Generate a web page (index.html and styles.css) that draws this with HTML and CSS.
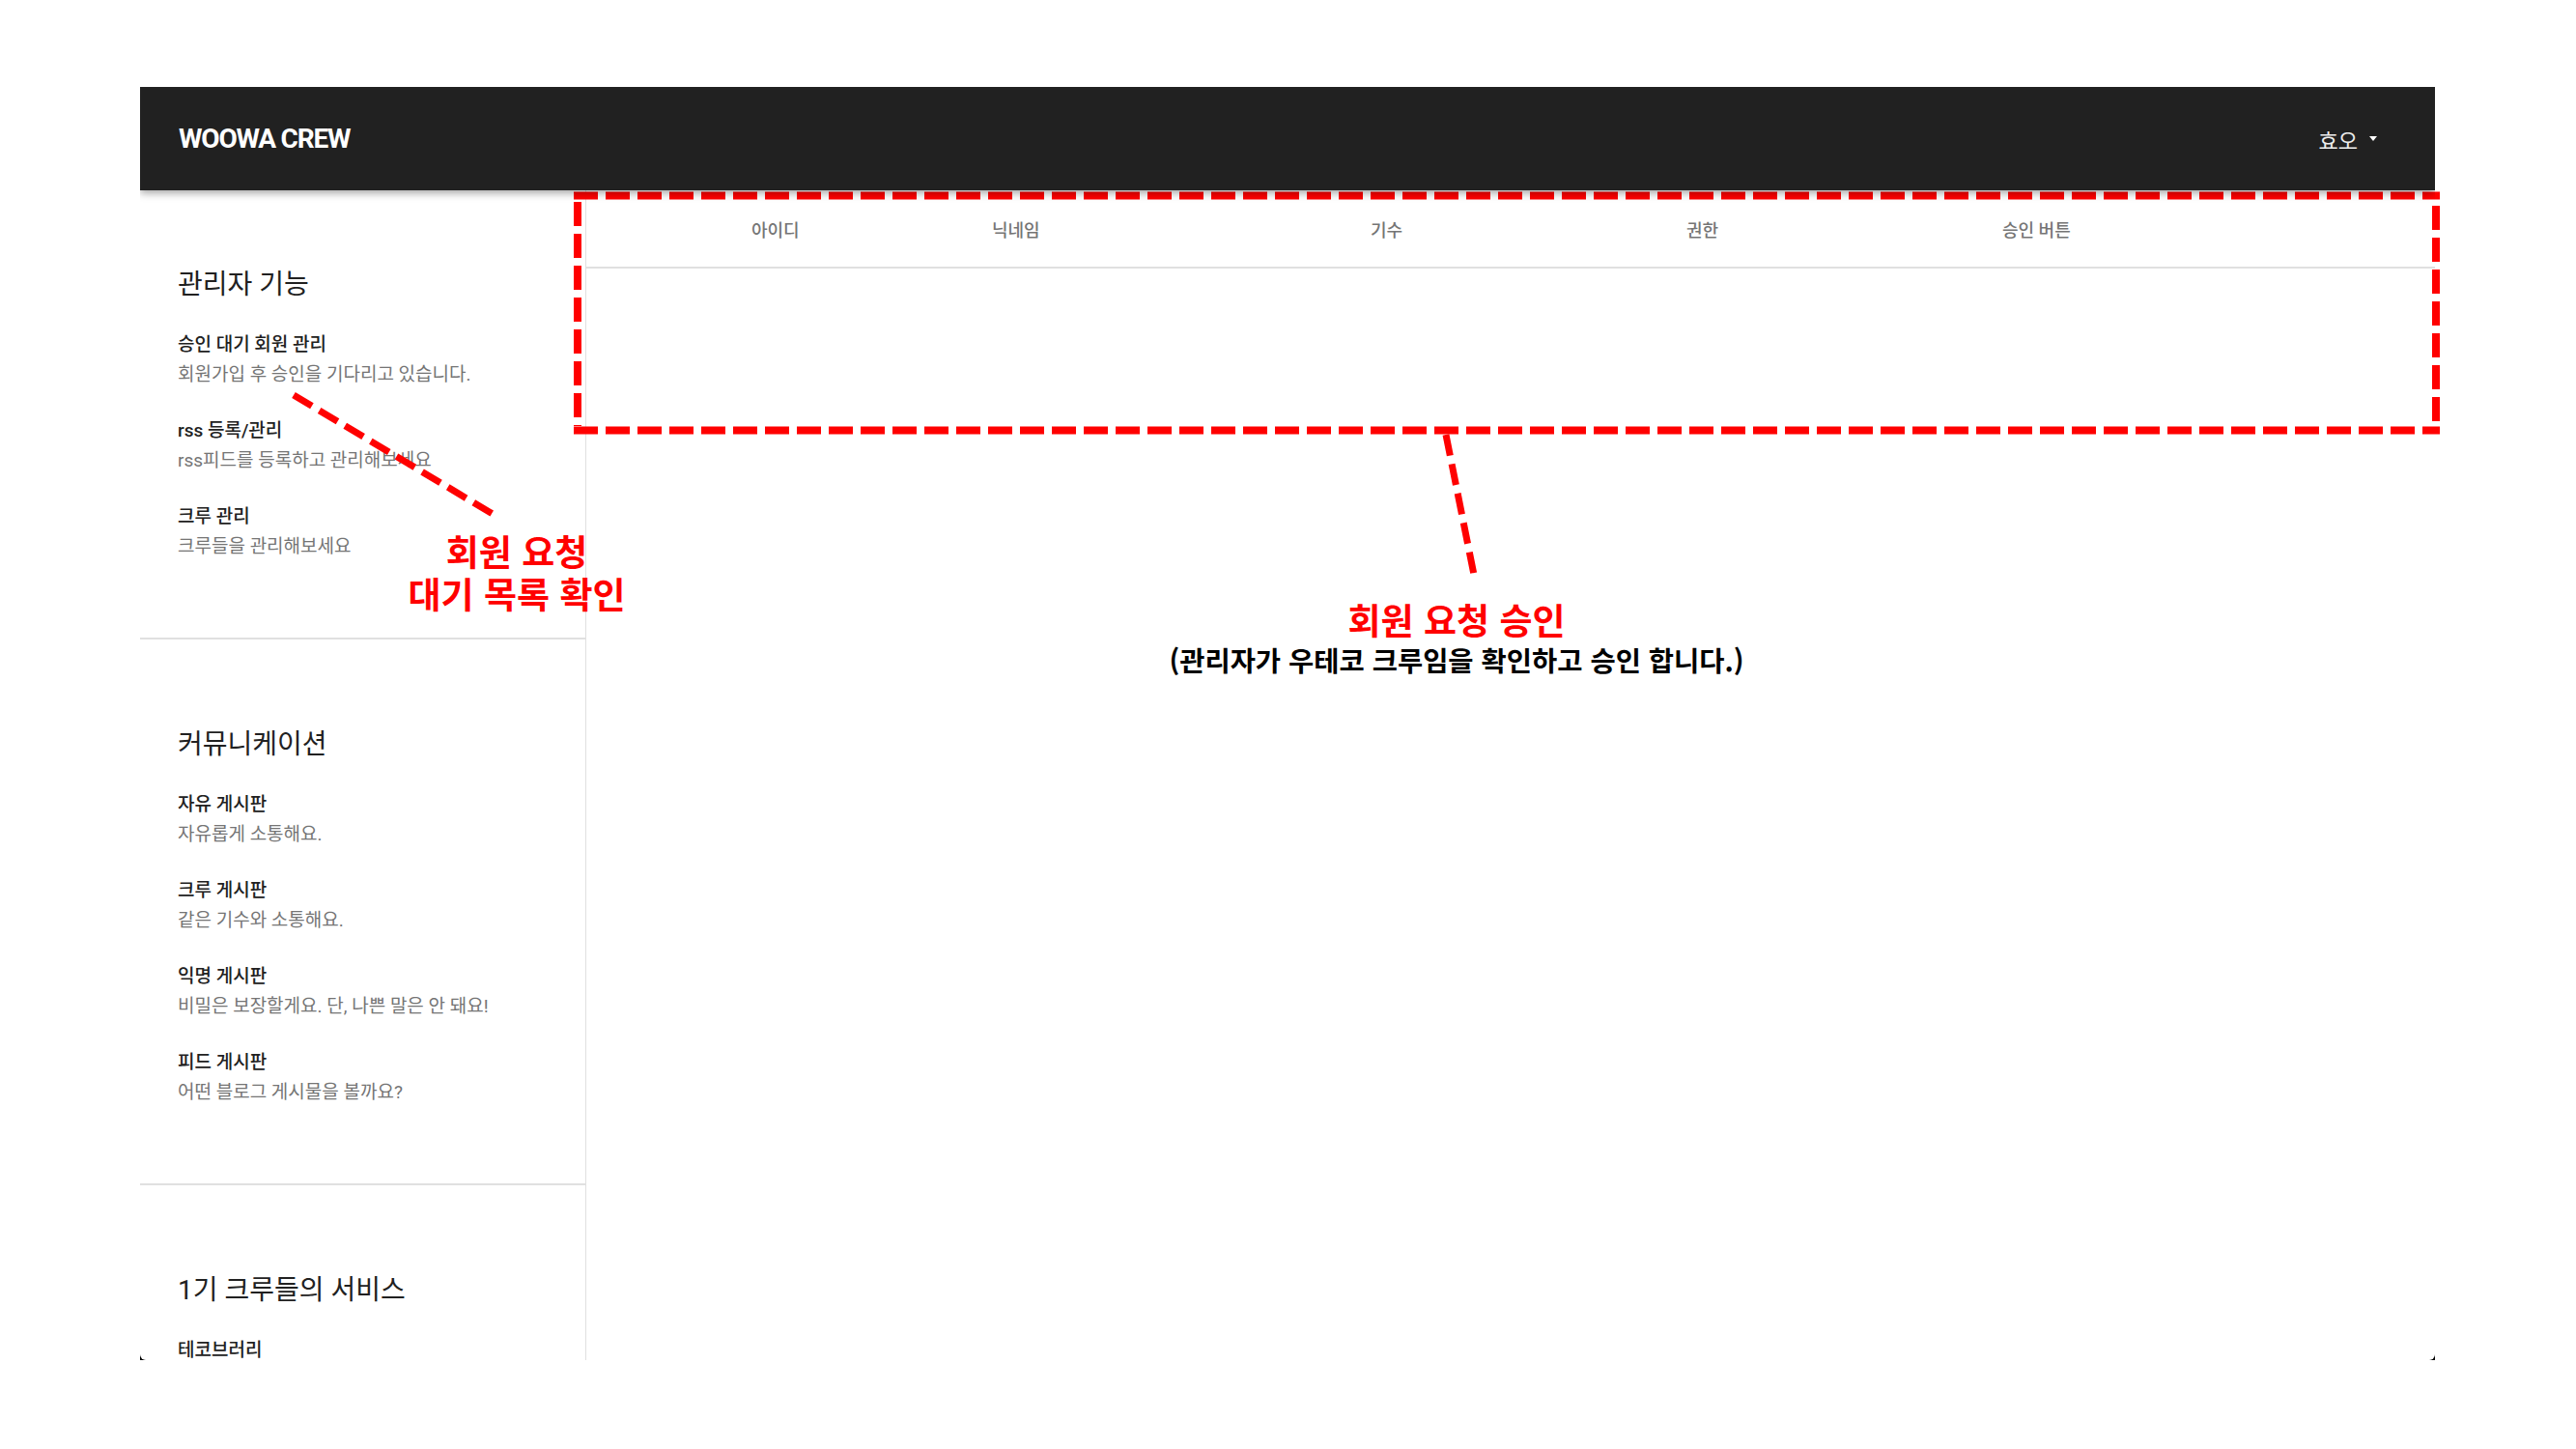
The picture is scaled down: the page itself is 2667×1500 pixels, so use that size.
FILE: index.html
```html
<!DOCTYPE html>
<html lang="ko">
<head>
<meta charset="utf-8">
<title>WOOWA CREW - 관리자</title>
<link rel="stylesheet" href="styles.css">
</head>
<body>
<div class="shot">
  <header class="topbar">
    <div class="brand">WOOWA CREW</div>
    <div class="user">효오<span class="caret"></span></div>
  </header>
  <div class="layout">
    <aside class="sidebar">
      <section class="nav-section">
        <h2 class="nav-heading">관리자 기능</h2>
        <ul class="nav-list">
          <li class="nav-item"><div class="nav-title">승인 대기 회원 관리</div><div class="nav-desc">회원가입 후 승인을 기다리고 있습니다.</div></li>
          <li class="nav-item"><div class="nav-title">rss 등록/관리</div><div class="nav-desc">rss피드를 등록하고 관리해보세요</div></li>
          <li class="nav-item"><div class="nav-title">크루 관리</div><div class="nav-desc">크루들을 관리해보세요</div></li>
        </ul>
      </section>
      <section class="nav-section">
        <h2 class="nav-heading">커뮤니케이션</h2>
        <ul class="nav-list">
          <li class="nav-item"><div class="nav-title">자유 게시판</div><div class="nav-desc">자유롭게 소통해요.</div></li>
          <li class="nav-item"><div class="nav-title">크루 게시판</div><div class="nav-desc">같은 기수와 소통해요.</div></li>
          <li class="nav-item"><div class="nav-title">익명 게시판</div><div class="nav-desc">비밀은 보장할게요. 단, 나쁜 말은 안 돼요!</div></li>
          <li class="nav-item"><div class="nav-title">피드 게시판</div><div class="nav-desc">어떤 블로그 게시물을 볼까요?</div></li>
        </ul>
      </section>
      <section class="nav-section">
        <h2 class="nav-heading">1기 크루들의 서비스</h2>
        <ul class="nav-list">
          <li class="nav-item"><div class="nav-title">테코브러리</div></li>
        </ul>
      </section>
    </aside>
    <main class="content">
      <div class="table-head">
        <span>아이디</span>
        <span>닉네임</span>
        <span>기수</span>
        <span>권한</span>
        <span>승인 버튼</span>
      </div>
    </main>
  </div>
</div>

<svg class="annot-lines" width="2667" height="1500" viewBox="0 0 2667 1500" xmlns="http://www.w3.org/2000/svg">
  <g fill="none" stroke="#ff0000" stroke-width="8" stroke-dasharray="25 8">
    <path d="M594 202.5 H2526"/>
    <path d="M594 445.5 H2526"/>
    <path d="M598 209 V441"/>
    <path d="M2522 213 V441"/>
  </g>
  <g fill="none" stroke="#ff0000" stroke-width="7" stroke-dasharray="22 9">
    <path d="M304 409 L510 532"/>
    <path d="M1497 450 L1527 600"/>
  </g>
</svg>
<div class="note note-left">
  <div class="note-line">회원 요청</div>
  <div class="note-line">대기 목록 확인</div>
</div>
<div class="note note-main">
  <div class="note-red">회원 요청 승인</div>
  <div class="note-sub">(관리자가 우테코 크루임을 확인하고 승인 합니다.)</div>
</div>
</body>
</html>
```

FILE: styles.css
```css
html, body {
  margin: 0;
  padding: 0;
}

body {
  position: relative;
  width: 2667px;
  height: 1500px;
  overflow: hidden;
  background: #ffffff;
  font-family: Roboto, "Noto Sans CJK KR", sans-serif;
}

.shot {
  margin: 90px 0 0 145px;
  width: 2376px;
  height: 1318px;
  overflow: hidden;
  background: #000000;
}

.topbar {
  position: relative;
  z-index: 1;
  height: 107px;
  box-sizing: border-box;
  padding: 0 60px 0 40px;
  display: flex;
  align-items: center;
  justify-content: space-between;
  background: #212121;
  box-shadow: 0 3px 8px rgba(0, 0, 0, 0.35);
}

.brand {
  color: #ffffff;
  font-family: Roboto, sans-serif;
  font-weight: 700;
  font-size: 28px;
  letter-spacing: -1.2px;
}

.user {
  display: flex;
  align-items: center;
  gap: 12px;
  color: #eeeeee;
  font-size: 22px;
}

.caret {
  width: 0;
  height: 0;
  border-left: 4.5px solid transparent;
  border-right: 4.5px solid transparent;
  border-top: 5px solid #ffffff;
}

.layout {
  display: flex;
  height: 1211px;
  background: #ffffff;
  border-radius: 0 0 6px 6px;
}

.sidebar {
  width: 462px;
  flex-shrink: 0;
  box-sizing: border-box;
  border-right: 1px solid #e0e0e0;
}

.nav-section {
  padding: 92px 0 81px 39px;
  border-top: 2px solid #e0e0e0;
}

.nav-section:first-child {
  padding-top: 81px;
  border-top: 0;
}

.nav-heading {
  margin: 0;
  font-size: 28px;
  font-weight: 400;
  line-height: 34px;
  color: #212121;
}

.nav-list {
  list-style: none;
  margin: 0;
  padding: 0;
}

.nav-item {
  margin-top: 32px;
}

.nav-title {
  font-size: 19px;
  font-weight: 500;
  line-height: 26px;
  color: #212121;
}

.nav-desc {
  margin-top: 5px;
  font-size: 19px;
  line-height: 26px;
  color: #757575;
}

.content {
  flex: 1;
}

.table-head {
  display: grid;
  grid-template-columns: 249px 392px 327px 327px 1fr;
  align-items: center;
  height: 79px;
  padding-left: 171px;
  border-bottom: 2px solid #e0e0e0;
  font-size: 18px;
  font-weight: 500;
  color: #757575;
}

.annot-lines {
  position: absolute;
  left: 0;
  top: 0;
  pointer-events: none;
}

.note {
  position: absolute;
  font-family: "Noto Sans CJK KR", sans-serif;
  font-weight: 700;
  text-align: center;
}

.note-left {
  left: 385px;
  top: 548px;
  width: 300px;
  font-size: 37px;
  line-height: 44px;
  color: #ff0000;
}

.note-main {
  left: 1108px;
  top: 619px;
  width: 800px;
}

.note-red {
  font-size: 37px;
  line-height: 44px;
  color: #ff0000;
}

.note-sub {
  font-size: 28.5px;
  line-height: 40px;
  color: #000000;
}
```
